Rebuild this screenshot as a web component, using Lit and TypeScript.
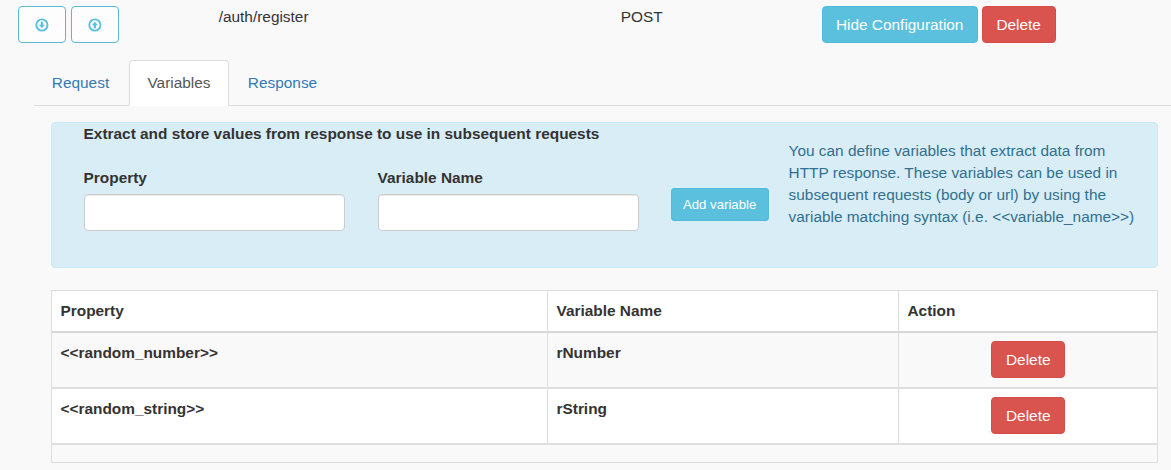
import { LitElement, html, css, svg } from "lit";
import { customElement, property, state } from "lit/decorators.js";

interface Variable {
  property: string;
  name: string;
}

@customElement("circle-arrow")
class CircleArrow extends LitElement {
  @property() direction = "down";

  static styles = css`
    :host {
      display: block;
      width: 14px;
      height: 14px;
    }
    svg {
      display: block;
    }
  `;

  render() {
    const arrow =
      this.direction === "down"
        ? svg`<path d="M5.8 3.7h2.2v3h1.9L6.9 10.3 3.9 6.7h1.9z" fill="currentColor" />`
        : svg`<path d="M5.8 10.3h2.2v-3h1.9L6.9 3.7 3.9 7.3h1.9z" fill="currentColor" />`;
    return html`<svg width="14" height="14" viewBox="0 0 14 14">
      <circle cx="6.9" cy="7" r="5.6" fill="none" stroke="currentColor" stroke-width="1.9" />
      ${arrow}
    </svg>`;
  }
}

@customElement("app-root")
class AppRoot extends LitElement {
  @state() tab = "Variables";
  @state() variables: Variable[] = [
    { property: "<<random_number>>", name: "rNumber" },
    { property: "<<random_string>>", name: "rString" },
  ];

  static styles = css`
    :host {
      display: block;
      box-sizing: border-box;
      width: 1171px;
      height: 470px;
      overflow: hidden;
      background: #f9f9f9;
      color: #333;
      font: 15.4px/22px "Liberation Sans", Arial, sans-serif;
    }
    * {
      box-sizing: border-box;
    }
    button,
    input {
      font: inherit;
      letter-spacing: inherit;
      margin: 0;
    }
    .summary {
      display: grid;
      grid-template-columns: 201px 402px 201px 1fr;
      padding: 6px 0 0 17.7px;
      height: 60px;
      align-items: start;
    }
    .group {
      display: flex;
      gap: 4px;
    }
    .order {
      gap: 5px;
    }
    .btn {
      display: flex;
      align-items: center;
      justify-content: center;
      height: 37px;
      padding: 0;
      border: 1px solid;
      border-radius: 4px;
      color: #fff;
      white-space: nowrap;
    }
    .outline {
      width: 48px;
      background: #fdfdfd;
      border-color: #5bb8d6;
      color: #5bc0de;
    }
    .info {
      background: #5bc0de;
      border-color: #52bbda;
    }
    .hide {
      width: 156px;
    }
    .danger {
      width: 74px;
      background: #d9534f;
      border-color: #d64b47;
    }
    .tabs {
      display: flex;
      height: 46px;
      margin-left: 34px;
      border-bottom: 1px solid #ddd;
    }
    .tab {
      height: 46px;
      padding: 11px 0 0;
      text-align: center;
      color: #337ab7;
      border: 1px solid transparent;
      border-radius: 4px 4px 0 0;
    }
    .request {
      width: 95px;
      padding-right: 2px;
    }
    .variables {
      width: 100px;
    }
    .response {
      width: 107px;
    }
    .active {
      background: #fff;
      color: #555;
      border-color: #ddd #ddd #fff;
    }
    .panel {
      display: grid;
      grid-template-columns: 294px 293px 118px 1fr;
      height: 146px;
      margin: 16px 13px 0 51px;
      padding: 0 16px 0 31.6px;
      background: #d9edf7;
      border: 1px solid #cbe9f1;
      border-radius: 4px;
      grid-template-rows: 44px 1fr;
    }
    .title {
      grid-column: 1 / 4;
      font-weight: bold;
    }
    .field {
      display: flex;
      flex-direction: column;
      gap: 5px;
      font-weight: bold;
    }
    .field input {
      width: 261px;
      height: 37px;
      padding: 6px 12px;
      border: 1px solid #ccc;
      border-radius: 4px;
      background: #fff;
      box-shadow: inset 0 1px 1px rgba(0, 0, 0, 0.075);
    }
    .add {
      width: 98px;
      height: 33px;
      margin-top: 21px;
      border-radius: 3px;
      font-size: 13.2px;
    }
    .help {
      grid-column: 4;
      grid-row: 1 / 3;
      margin: 17px 0 0;
      color: #31708f;
      white-space: nowrap;
    }
    .table {
      margin: 22px 13px 0 51px;
      border: 1px solid #ddd;
    }
    .row {
      display: grid;
      grid-template-columns: 495px 351px 1fr;
      height: 56px;
      border-bottom: 2px solid #dfdfdf;
      font-weight: bold;
      background: #fff;
    }
    .row:nth-child(even) {
      background: #f9f9f9;
    }
    .head {
      height: 42px;
      border-bottom: 2px solid #d8d8d8;
    }
    .cell {
      padding: 9px 8px 0 8.5px;
    }
    .cell + .cell {
      border-left: 1px solid #ddd;
    }
    .action {
      display: flex;
      justify-content: center;
      align-items: flex-start;
    }
    .head .action {
      justify-content: flex-start;
    }
    .row .action .btn {
      font-weight: normal;
      margin-top: -1px;
    }
    .foot {
      height: 17px;
      background: #f9f9f9;
    }
  `;

  private remove(item: Variable) {
    this.variables = this.variables.filter((v) => v !== item);
  }

  render() {
    return html`
      <div class="summary">
        <div class="group order">
          <button class="btn outline" aria-label="Move down"><circle-arrow></circle-arrow></button>
          <button class="btn outline" aria-label="Move up"><circle-arrow direction="up"></circle-arrow></button>
        </div>
        <span>/auth/register</span>
        <span>POST</span>
        <div class="group">
          <button class="btn info hide">Hide Configuration</button>
          <button class="btn danger">Delete</button>
        </div>
      </div>
      <nav class="tabs">
        ${["Request", "Variables", "Response"].map(
          (t) => html`<div
            class="tab ${t.toLowerCase()} ${t === this.tab ? "active" : ""}"
            @click=${() => (this.tab = t)}
          >${t}</div>`,
        )}
      </nav>
      <section class="panel">
        <div class="title">Extract and store values from response to use in subsequent requests</div>
        <label class="field">Property<input /></label>
        <label class="field">Variable Name<input /></label>
        <button class="btn info add">Add variable</button>
        <p class="help">
          You can define variables that extract data from<br />
          HTTP response. These variables can be used in<br />
          subsequent requests (body or url) by using the<br />
          variable matching syntax (i.e. &lt;&lt;variable_name&gt;&gt;)
        </p>
      </section>
      <section class="table">
        <div class="row head">
          <div class="cell">Property</div>
          <div class="cell">Variable Name</div>
          <div class="cell">Action</div>
        </div>
        ${this.variables.map(
          (v) => html`<div class="row">
            <div class="cell">${v.property}</div>
            <div class="cell">${v.name}</div>
            <div class="cell action">
              <button class="btn danger" @click=${() => this.remove(v)}>Delete</button>
            </div>
          </div>`,
        )}
        <div class="foot"></div>
      </section>
    `;
  }
}
